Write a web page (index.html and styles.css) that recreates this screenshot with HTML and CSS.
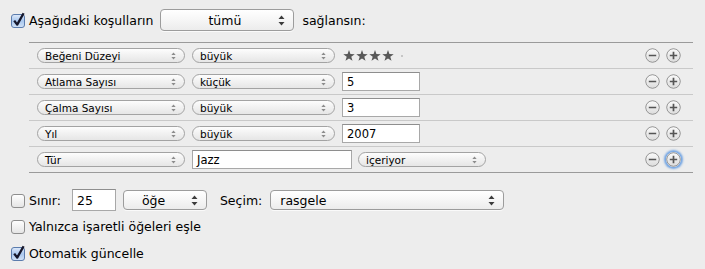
FILE: index.html
```html
<!DOCTYPE html>
<html lang="tr">
<head>
  <meta charset="UTF-8" />
  <title>Akıllı Çalma Listesi</title>
  <link rel="stylesheet" href="styles.css">
</head>
<body>
  <svg class="defs" width="0" height="0" aria-hidden="true">
    <defs>
      <linearGradient id="check-on" x1="0" y1="0" x2="0" y2="1">
        <stop offset="0" stop-color="#dfeafa"/>
        <stop offset="0.5" stop-color="#a9c7ee"/>
        <stop offset="1" stop-color="#d3e3f7"/>
      </linearGradient>
      <linearGradient id="check-off" x1="0" y1="0" x2="0" y2="1">
        <stop offset="0" stop-color="#ffffff"/>
        <stop offset="1" stop-color="#e4e4e4"/>
      </linearGradient>
      <linearGradient id="round-btn" x1="0" y1="0" x2="0" y2="1">
        <stop offset="0" stop-color="#fafafa"/>
        <stop offset="1" stop-color="#dcdcdc"/>
      </linearGradient>
      <symbol id="star" viewBox="0 0 11 11">
        <polygon points="5.5,0 6.79,3.72 10.73,3.8 7.59,6.18 8.73,9.95 5.5,7.7 2.27,9.95 3.41,6.18 0.27,3.8 4.21,3.72"/>
      </symbol>
      <symbol id="arrows" viewBox="0 0 7 11">
        <path d="M3.5 0.5 L6.5 4 H0.5Z M3.5 10.5 L6.5 7 H0.5Z"/>
      </symbol>
      <symbol id="tick" viewBox="0 0 16 16">
        <rect x="1.5" y="2.5" width="13" height="13" rx="2.5" fill="url(#check-on)" stroke="#5b7cad"/>
        <path d="M4.2 8.6 L7.2 12.6 L13.6 1.2" fill="none" stroke="#15162a" stroke-width="2.3" stroke-linejoin="round"/>
      </symbol>
      <symbol id="untick" viewBox="0 0 16 16">
        <rect x="1.5" y="2.5" width="13" height="13" rx="2.5" fill="url(#check-off)" stroke="#8e8e8e"/>
      </symbol>
      <symbol id="minus" viewBox="0 0 15 15">
        <circle cx="7.5" cy="7.5" r="6.8" fill="url(#round-btn)" stroke="#8c8c8c"/>
        <path d="M3.8 7.5 H11.2" stroke="#555" stroke-width="1.7"/>
      </symbol>
      <symbol id="plus" viewBox="0 0 15 15">
        <circle cx="7.5" cy="7.5" r="6.8" fill="url(#round-btn)" stroke="#8c8c8c"/>
        <path d="M3.8 7.5 H11.2 M7.5 3.8 V11.2" stroke="#555" stroke-width="1.7"/>
      </symbol>
    </defs>
  </svg>

  <div class="panel">
    <div class="match-line">
      <label class="check"><svg class="box"><use href="#tick"/></svg>Aşağıdaki koşulların</label>
      <div class="popup all">
        <span class="popup-text">tümü</span>
        <svg class="arrows"><use href="#arrows"/></svg>
      </div>
      <span class="after">sağlansın:</span>
    </div>

    <div class="rules">
      <div class="rule">
        <div class="mini field-name"><span>Beğeni Düzeyi</span><svg class="mini-arrows"><use href="#arrows"/></svg></div>
        <div class="mini operator"><span>büyük</span><svg class="mini-arrows"><use href="#arrows"/></svg></div>
        <div class="stars">
          <svg class="star"><use href="#star"/></svg>
          <svg class="star"><use href="#star"/></svg>
          <svg class="star"><use href="#star"/></svg>
          <svg class="star"><use href="#star"/></svg>
          <span class="dot"></span>
        </div>
        <div class="row-buttons">
          <svg class="round"><use href="#minus"/></svg>
          <svg class="round"><use href="#plus"/></svg>
        </div>
      </div>
      <div class="rule">
        <div class="mini field-name"><span>Atlama Sayısı</span><svg class="mini-arrows"><use href="#arrows"/></svg></div>
        <div class="mini operator"><span>küçük</span><svg class="mini-arrows"><use href="#arrows"/></svg></div>
        <div class="textbox value">5</div>
        <div class="row-buttons">
          <svg class="round"><use href="#minus"/></svg>
          <svg class="round"><use href="#plus"/></svg>
        </div>
      </div>
      <div class="rule">
        <div class="mini field-name"><span>Çalma Sayısı</span><svg class="mini-arrows"><use href="#arrows"/></svg></div>
        <div class="mini operator"><span>büyük</span><svg class="mini-arrows"><use href="#arrows"/></svg></div>
        <div class="textbox value">3</div>
        <div class="row-buttons">
          <svg class="round"><use href="#minus"/></svg>
          <svg class="round"><use href="#plus"/></svg>
        </div>
      </div>
      <div class="rule">
        <div class="mini field-name"><span>Yıl</span><svg class="mini-arrows"><use href="#arrows"/></svg></div>
        <div class="mini operator"><span>büyük</span><svg class="mini-arrows"><use href="#arrows"/></svg></div>
        <div class="textbox value">2007</div>
        <div class="row-buttons">
          <svg class="round"><use href="#minus"/></svg>
          <svg class="round"><use href="#plus"/></svg>
        </div>
      </div>
      <div class="rule">
        <div class="mini field-name"><span>Tür</span><svg class="mini-arrows"><use href="#arrows"/></svg></div>
        <div class="textbox genre">Jazz</div>
        <div class="mini contains"><span>içeriyor</span><svg class="mini-arrows"><use href="#arrows"/></svg></div>
        <div class="row-buttons">
          <svg class="round"><use href="#minus"/></svg>
          <svg class="round focused"><use href="#plus"/></svg>
        </div>
      </div>
    </div>

    <div class="limit-line">
      <label class="check"><svg class="box"><use href="#untick"/></svg>Sınır:</label>
      <div class="textbox limit">25</div>
      <div class="popup unit">
        <span class="popup-text">öğe</span>
        <svg class="arrows"><use href="#arrows"/></svg>
      </div>
      <span class="select-label">Seçim:</span>
      <div class="popup order">
        <span class="popup-text">rasgele</span>
        <svg class="arrows"><use href="#arrows"/></svg>
      </div>
    </div>

    <label class="check option"><svg class="box"><use href="#untick"/></svg>Yalnızca işaretli öğeleri eşle</label>
    <label class="check option live"><svg class="box"><use href="#tick"/></svg>Otomatik güncelle</label>
  </div>
</body>
</html>
```

FILE: styles.css
```css
body {
  margin: 0;
  background-color: #ededed;
  font-family: 'DejaVu Sans', 'Liberation Sans', sans-serif;
  font-size: 12.5px;
  color: #000;
}
.defs {
  position: absolute;
  width: 0;
  height: 0;
}
.panel {
  padding: 9px 0 0 10px;
  width: 683px;
}
.check {
  display: flex;
  align-items: center;
  height: 22px;
}
.box {
  width: 16px;
  height: 16px;
  margin-right: 3px;
}
.match-line {
  display: flex;
  align-items: center;
  height: 22px;
}
.popup {
  display: flex;
  align-items: center;
  box-sizing: border-box;
  height: 22px;
  border: 1px solid #9c9c9c;
  border-radius: 4px;
  background: linear-gradient(#ffffff, #f6f6f6 50%, #ececec);
  box-shadow: 0 1px 0 rgba(255, 255, 255, 0.7);
}
.popup .popup-text {
  flex: 1;
}
.arrows {
  width: 7px;
  height: 11px;
  fill: #3c3c3c;
  margin-right: 8px;
}
.all {
  width: 134px;
  margin-left: 7px;
  text-align: center;
  padding-left: 10px;
}
.after {
  margin-left: 8px;
}
.rules {
  margin: 11px 0 0 19px;
  width: 664px;
  border-top: 1px solid #9a9a9a;
  border-bottom: 1px solid #9a9a9a;
}
.rule {
  display: flex;
  align-items: center;
  height: 26px;
  box-sizing: border-box;
  padding-left: 8px;
  border-bottom: 1px solid #c9c9c9;
}
.rule:last-child {
  border-bottom: none;
  height: 25px;
}
.mini {
  display: flex;
  align-items: center;
  box-sizing: border-box;
  height: 15px;
  padding-left: 7px;
  margin-right: 7px;
  border: 1px solid #a3a3a3;
  border-radius: 8px;
  background: linear-gradient(#fdfdfd, #f1f1f1 50%, #e6e6e6);
  font-size: 10.5px;
}
.mini span {
  flex: 1;
}
.mini-arrows {
  width: 5px;
  height: 8px;
  fill: #8c8c8c;
  margin-right: 8px;
}
.field-name {
  width: 148px;
}
.operator {
  width: 143px;
}
.contains {
  width: 128px;
}
.textbox {
  box-sizing: border-box;
  background-color: #fff;
  border: 1px solid #a8a8a8;
  border-top-color: #8e8e8e;
  font-size: 11.5px;
  padding-left: 4px;
  display: flex;
  align-items: center;
}
.value {
  width: 78px;
  height: 19px;
}
.genre {
  width: 160px;
  height: 19px;
  margin-right: 6px;
}
.stars {
  display: flex;
  align-items: center;
  gap: 1px;
  margin-left: 1px;
}
.star {
  width: 12px;
  height: 12px;
  fill: #585858;
}
.dot {
  width: 2px;
  height: 2px;
  border-radius: 1px;
  background-color: #b8b8b8;
  margin-left: 6px;
}
.row-buttons {
  display: flex;
  gap: 6px;
  margin-left: auto;
  margin-right: 12px;
}
.round {
  width: 15px;
  height: 15px;
  border-radius: 50%;
}
.round.focused {
  box-shadow: 0 0 2px 2px rgba(92, 150, 225, 0.85);
}
.limit-line {
  display: flex;
  align-items: center;
  margin-top: 16px;
  height: 22px;
}
.limit {
  width: 44px;
  height: 22px;
  margin-left: 11px;
  font-size: 12.5px;
}
.unit {
  width: 84px;
  height: 20px;
  margin-left: 7px;
  padding-left: 18px;
}
.select-label {
  margin-left: 13px;
}
.order {
  width: 234px;
  height: 20px;
  margin-left: 8px;
  padding-left: 9px;
}
.option {
  margin-top: 4px;
}
.live {
  margin-top: 5px;
}
```
